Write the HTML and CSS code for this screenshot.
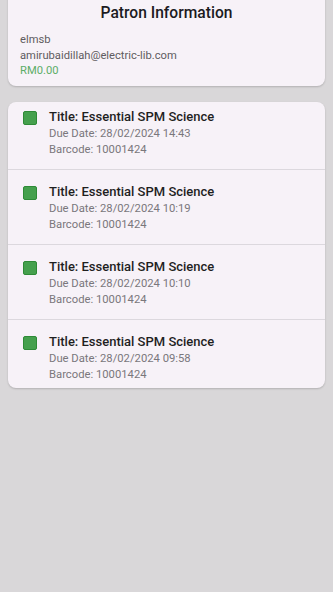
FILE: index.html
```html
<!DOCTYPE html>
<html lang="en">

<head>
    <meta charset="UTF-8">
    <meta name="viewport" content="width=device-width, initial-scale=1.0">
    <title>Patron Information</title>
    <link rel="stylesheet" href="styles.css">
</head>

<body>
    <div class="page">
        <!-- Patron card -->
        <div class="card patron">
            <h2>Patron Information</h2>
            <div class="line">elmsb</div>
            <div class="line">amirubaidillah@electric-lib.com</div>
            <div class="line balance">RM0.00</div>
        </div>

        <!-- Loans list -->
        <div class="card loans">
            <div class="loan">
                <span class="status"></span>
                <div class="info">
                    <div class="title">Title: Essential SPM Science</div>
                    <div class="sub">Due Date: 28/02/2024 14:43</div>
                    <div class="sub">Barcode: 10001424</div>
                </div>
            </div>
            <div class="divider"></div>
            <div class="loan">
                <span class="status"></span>
                <div class="info">
                    <div class="title">Title: Essential SPM Science</div>
                    <div class="sub">Due Date: 28/02/2024 10:19</div>
                    <div class="sub">Barcode: 10001424</div>
                </div>
            </div>
            <div class="divider"></div>
            <div class="loan">
                <span class="status"></span>
                <div class="info">
                    <div class="title">Title: Essential SPM Science</div>
                    <div class="sub">Due Date: 28/02/2024 10:10</div>
                    <div class="sub">Barcode: 10001424</div>
                </div>
            </div>
            <div class="divider"></div>
            <div class="loan">
                <span class="status"></span>
                <div class="info">
                    <div class="title">Title: Essential SPM Science</div>
                    <div class="sub">Due Date: 28/02/2024 09:58</div>
                    <div class="sub">Barcode: 10001424</div>
                </div>
            </div>
        </div>
    </div>
</body>

</html>
```

FILE: styles.css
```css
body {
    font-family: Roboto, "Noto Sans", sans-serif;
    background-color: #d9d7d9;
    margin: 0;
    height: 592px;
    overflow: hidden;
}

.page {
    display: flex;
    flex-direction: column;
    gap: 16px;
    padding: 0 8px;
    margin-top: -10px;
}

.card {
    background-color: #f7f2f8;
    border-radius: 8px;
    box-shadow: 0 1px 2px rgba(0, 0, 0, 0.18);
}

.patron {
    padding: 12px 12px 7.5px;
}

h2 {
    text-align: center;
    font-size: 15.6px;
    font-weight: 500;
    color: #1c1b1f;
    margin: 1px 0 9px;
    line-height: 20px;
}

.line {
    font-size: 11.2px;
    line-height: 15.5px;
    color: #5f5c60;
}

.balance {
    color: #5cad67;
}

.loans {
    padding-bottom: 2px;
}

.loan {
    display: flex;
    align-items: flex-start;
    padding: 6px 15px 0;
    height: 53px;
}

.divider {
    height: 1px;
    margin: 8px 0 7px;
    background-color: #dcd8de;
}

.status {
    width: 12px;
    height: 12px;
    margin: 3px 12px 0 0;
    background-color: #45a04d;
    border: 1px solid #2e8a36;
    border-radius: 2px;
    flex-shrink: 0;
}

.title {
    font-size: 13px;
    font-weight: 500;
    color: #1f1f1f;
    line-height: 18px;
}

.sub {
    font-size: 11.25px;
    color: #7a777c;
    line-height: 16px;
}
```
